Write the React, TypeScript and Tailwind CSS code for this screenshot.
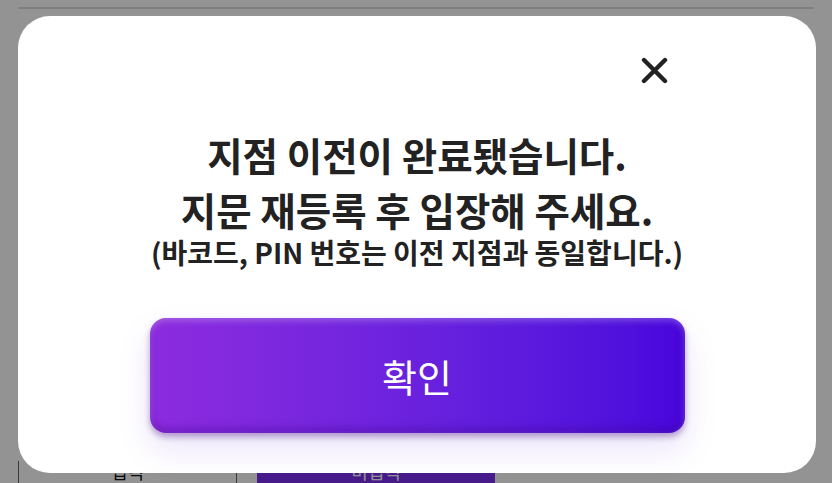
import React from 'react';

const font = { fontFamily: '"Noto Sans CJK KR", "Noto Sans", sans-serif' };

const App: React.FC = () => {
  return (
    <div className="relative h-[483px] w-[832px] overflow-hidden bg-white" style={font}>
      {/* page behind the dialog */}
      <div className="flex h-full flex-col justify-between px-[18px] pt-[7px]">
        <div className="h-[2px] bg-[#dcdcdc]" />
        <div className="flex h-[22px] border-l border-[#666]">
          <div className="flex w-[218px] items-start justify-center border-r border-[#666] text-[18px] leading-[20px] text-[#111]">
            입력
          </div>
          <div className="ml-[20px] flex w-[238px] items-start justify-center bg-[#7b2ff0] text-[18px] leading-[20px] text-white">
            미입력
          </div>
        </div>
      </div>

      {/* overlay */}
      <div className="absolute inset-0 bg-black/[0.425]" />

      {/* dialog */}
      <div className="absolute left-[18px] top-[16px] flex h-[457px] w-[798px] flex-col items-center rounded-[32px] bg-white">
        <div className="flex w-full justify-end pr-[148px] pt-[41px]">
          <button className="flex h-[27px] w-[27px] items-center justify-center text-[#222]">
            <svg width="27" height="27" viewBox="0 0 27 27" fill="none">
              <path d="M3 3L24 24M24 3L3 24" stroke="currentColor" strokeWidth="4.4" strokeLinecap="round" />
            </svg>
          </button>
        </div>

        <div className="mt-[42px] flex flex-col items-center text-[#222]">
          <p className="text-[38.5px] font-bold leading-[56px]">지점 이전이 완료됐습니다.</p>
          <p className="text-[38.5px] font-bold leading-[54px]">지문 재등록 후 입장해 주세요.</p>
          <p className="text-[28px] font-bold leading-[32px]">(바코드, PIN 번호는 이전 지점과 동일합니다.)</p>
        </div>

        <button className="mt-[50px] flex h-[115px] w-[535px] items-center justify-center rounded-[16px] bg-gradient-to-r from-[#8d2bdf] to-[#4805dc] text-[38px] text-white shadow-[0_4px_6px_rgba(60,0,120,0.35),0_16px_34px_rgba(110,60,220,0.14),inset_0_3px_6px_rgba(255,255,255,0.25),inset_0_-5px_8px_rgba(60,0,140,0.35)]">
          확인
        </button>
      </div>
    </div>
  );
};

export default App;
